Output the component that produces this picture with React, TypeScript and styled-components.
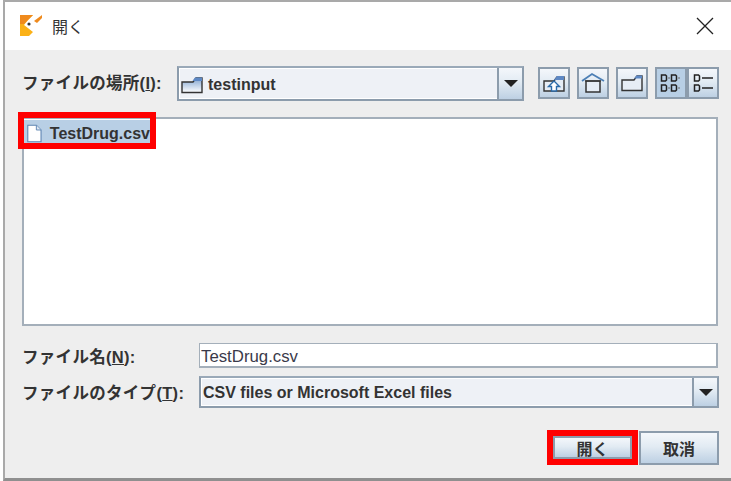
import styled, { createGlobalStyle } from 'styled-components';

const GlobalStyle = createGlobalStyle`
  html, body {
    margin: 0;
    padding: 0;
    background: #fff;
    width: 731px;
    height: 481px;
    overflow: hidden;
  }
  body {
    font-family: "Liberation Sans", "Noto Sans CJK JP", sans-serif;
  }
`;

const metal = 'linear-gradient(180deg, #f4f7fb 0%, #e2ebf3 45%, #bdd0e3 100%)';
const edge = '#8c9cac';

const Window = styled.div`
  box-sizing: border-box;
  margin-left: 3px;
  width: 728px;
  height: 481px;
  border-top: 2px solid #a9a9a9;
  border-left: 2px solid #a9a9a9;
  border-bottom: 3px solid #8f8f8f;
  display: flex;
  flex-direction: column;
`;

const TitleBar = styled.div`
  height: 48px;
  flex: none;
  background: #fff;
  display: flex;
  align-items: center;
  padding: 0 17px 0 15px;
  gap: 9px;
`;

const TitleText = styled.span`
  flex: 1;
  font-size: 16px;
  color: #333;
  font-family: "Noto Sans CJK JP", sans-serif;
`;

const Body = styled.div`
  flex: 1;
  background: #eeeeee;
  padding: 16px 0 0 17px;
  display: flex;
  flex-direction: column;
`;

const TopRow = styled.div`
  display: flex;
  align-items: flex-start;
  height: 35px;
`;

const Label = styled.label<{ $width: number }>`
  width: ${(p) => p.$width}px;
  flex: none;
  font-size: 16.5px;
  font-weight: 700;
  color: #333;
  white-space: nowrap;
  letter-spacing: 0.3px;
`;

const TopLabel = styled(Label)`
  line-height: 35px;
`;

const Combo = styled.div<{ $width: number; $height: number }>`
  box-sizing: border-box;
  width: ${(p) => p.$width}px;
  height: ${(p) => p.$height}px;
  flex: none;
  display: flex;
  align-items: stretch;
  border: 2px solid ${edge};
  border-top-color: #9aa9b8;
  background: #eef1f6;
`;

const ComboValue = styled.div`
  flex: 1;
  display: flex;
  align-items: center;
  gap: 5px;
  padding: 2px 0 0 1px;
  font-size: 16px;
  font-weight: 700;
  color: #333;
  border: 1px solid #fff;
  border-right: none;
`;

const ArrowButton = styled.div`
  width: 23px;
  flex: none;
  border-left: 2px solid ${edge};
  background: ${metal};
  display: flex;
  align-items: center;
  justify-content: center;
  &::after {
    content: '';
    width: 0;
    height: 0;
    border-left: 7px solid transparent;
    border-right: 7px solid transparent;
    border-top: 7px solid #222;
  }
`;

const Tools = styled.div`
  display: flex;
  margin-left: 14px;
  margin-top: 1px;
  gap: 7px;
`;

const ToolGroup = styled.div`
  display: flex;
`;

const ToolButton = styled.div<{ $active?: boolean }>`
  box-sizing: border-box;
  width: 32px;
  height: 32px;
  border: 2px solid ${edge};
  background: ${(p) => (p.$active ? '#b8cfe5' : metal)};
  display: flex;
  align-items: center;
  justify-content: center;
`;

const FileList = styled.div`
  box-sizing: border-box;
  width: 696px;
  height: 209px;
  margin-top: 16px;
  background: #fff;
  border: 2px solid #a4afba;
  padding: 1px 0 0;
  position: relative;
`;

const FileItem = styled.div`
  box-sizing: border-box;
  width: 126px;
  height: 25px;
  background: #b8cfe5;
  display: flex;
  align-items: center;
  gap: 8px;
  padding: 2px 0 0 3px;
  font-size: 16px;
  font-weight: 700;
  color: #333;
  white-space: nowrap;
  overflow: hidden;
`;

const ItemFrame = styled.div`
  position: absolute;
  box-sizing: border-box;
  left: -6px;
  top: -7px;
  width: 138px;
  height: 37px;
  border: 6px solid #ff0000;
  pointer-events: none;
`;

const Row = styled.div<{ $gap: number }>`
  display: flex;
  align-items: center;
  margin-top: ${(p) => p.$gap}px;
`;

const TextField = styled.div`
  box-sizing: border-box;
  width: 519px;
  height: 25px;
  background: #fff;
  border: solid #a4afba;
  border-width: 1px 2px 2px 1px;
  font-size: 16.8px;
  line-height: 25px;
  padding-left: 1px;
  color: #3a3a4a;
`;

const Footer = styled.div`
  display: flex;
  justify-content: flex-end;
  align-items: flex-end;
  margin-top: 22px;
  margin-right: 12px;
  gap: 1px;
`;

const ButtonFrame = styled.div`
  box-sizing: border-box;
  border: 6px solid #ff0000;
  width: 91px;
  height: 35px;
  flex: none;
`;

const PushButton = styled.button<{ $width?: number }>`
  box-sizing: border-box;
  width: ${(p) => (p.$width ? `${p.$width}px` : '100%')};
  height: ${(p) => (p.$width ? '34px' : '100%')};
  padding: 0;
  border: 2px solid ${edge};
  background: ${metal};
  font-family: "Noto Sans CJK JP", sans-serif;
  font-size: 16px;
  font-weight: 700;
  color: #333;
  line-height: 1;
`;

const Logo = () => (
  <svg width="23" height="22" viewBox="0 0 23 22">
    <path d="M0 0H13L8 5 4 10 13 17 9 21H0Z" fill="#fbb117" />
    <path d="M0 0H13L8 5 4 9H0Z" fill="#ef8a1d" />
    <circle cx="9" cy="9" r="1.6" fill="#333" />
    <path d="M14 6L22 0V3L17 8Z" fill="#ef8a1d" />
  </svg>
);

const CloseIcon = () => (
  <svg width="18" height="18" viewBox="0 0 18 18">
    <path d="M1 1L17 17M17 1L1 17" stroke="#222" strokeWidth="1.3" fill="none" />
  </svg>
);

const FolderIcon = () => (
  <svg width="22" height="18" viewBox="0 0 22 18">
    <defs>
      <linearGradient id="fold" x1="0" y1="0" x2="0" y2="1">
        <stop offset="0" stopColor="#7fa3d0" />
        <stop offset="1" stopColor="#ffffff" />
      </linearGradient>
    </defs>
    <path d="M1 6H12L15 2H21V16.5H1Z" fill="url(#fold)" stroke="#333" strokeWidth="1.4" />
    <path d="M14 1.5H21V5H11.5Z" fill="#5d88c4" />
  </svg>
);

const FileIcon = () => (
  <svg width="19" height="23" viewBox="0 0 19 23">
    <path d="M1 1H12L18 7V22H1Z" fill="#fff" stroke="#5f86b3" strokeWidth="1.4" />
    <path d="M12 1V7H18" fill="#dbe7f3" stroke="#5f86b3" strokeWidth="1.2" />
  </svg>
);

const UpFolderIcon = () => (
  <svg width="22" height="19" viewBox="0 0 22 19">
    <path d="M1 7H11L14 3H21V17H1Z" fill="#e6edf5" stroke="#333" strokeWidth="1.4" />
    <path d="M14 2H21V6H11Z" fill="#5d88c4" />
    <path d="M11 7L16.5 12.5H13.5V17H8.5V12.5H5.5Z" fill="#fff" stroke="#2a6aa8" strokeWidth="1.4" />
  </svg>
);

const HomeIcon = () => (
  <svg width="24" height="22" viewBox="0 0 24 22">
    <path d="M5 9H19V20H5Z" fill="#e6edf5" stroke="#333" strokeWidth="1.5" />
    <path d="M1 9L11 2 23 9" fill="none" stroke="#4c7fb5" strokeWidth="1.8" />
    <path d="M4 9H20" stroke="#333" strokeWidth="1.2" />
  </svg>
);

const NewFolderIcon = () => (
  <svg width="22" height="18" viewBox="0 0 22 18">
    <path d="M1 6H13L16 2H21V16.5H1Z" fill="#e6edf5" stroke="#333" strokeWidth="1.4" />
    <path d="M15.5 1.5H21V4.5H13Z" fill="#5d88c4" />
  </svg>
);

const GridIcon = () => (
  <svg width="22" height="20" viewBox="0 0 22 20" fill="none" stroke="#222" strokeWidth="1.5">
    <path d="M1.5 2H5.5L6.5 3V7L5.5 8H1.5Z" />
    <path d="M11.5 2H15.5L16.5 3V7L15.5 8H11.5Z" />
    <path d="M1.5 12H5.5L6.5 13V17L5.5 18H1.5Z" />
    <path d="M11.5 12H15.5L16.5 13V17L15.5 18H11.5Z" />
    <path d="M8 5H10M18 5H20M8 15H10M18 15H20" strokeWidth="1.2" stroke="#666" />
  </svg>
);

const ListIcon = () => (
  <svg width="22" height="20" viewBox="0 0 22 20" fill="none" stroke="#222" strokeWidth="1.5">
    <path d="M2.5 2H6.5L7.5 3V7L6.5 8H2.5Z" />
    <path d="M2.5 12H6.5L7.5 13V17L6.5 18H2.5Z" />
    <path d="M10 5H21M10 15H21" />
  </svg>
);

export default function App() {
  return (
    <>
      <GlobalStyle />
      <Window>
        <TitleBar>
          <Logo />
          <TitleText>開く</TitleText>
          <CloseIcon />
        </TitleBar>
        <Body>
          <TopRow>
            <TopLabel $width={155}>
              ファイルの場所(<u>I</u>):
            </TopLabel>
            <Combo $width={347} $height={35}>
              <ComboValue>
                <FolderIcon />
                testinput
              </ComboValue>
              <ArrowButton />
            </Combo>
            <Tools>
              <ToolButton><UpFolderIcon /></ToolButton>
              <ToolButton><HomeIcon /></ToolButton>
              <ToolButton><NewFolderIcon /></ToolButton>
              <ToolGroup>
                <ToolButton $active><GridIcon /></ToolButton>
                <ToolButton><ListIcon /></ToolButton>
              </ToolGroup>
            </Tools>
          </TopRow>
          <FileList>
            <FileItem>
              <FileIcon />
              TestDrug.csv
            </FileItem>
            <ItemFrame />
          </FileList>
          <Row $gap={17}>
            <Label $width={177}>
              ファイル名(<u>N</u>):
            </Label>
            <TextField>TestDrug.csv</TextField>
          </Row>
          <Row $gap={8}>
            <Label $width={177}>
              ファイルのタイプ(<u>T</u>):
            </Label>
            <Combo $width={520} $height={32}>
              <ComboValue>CSV files or Microsoft Excel files</ComboValue>
              <ArrowButton />
            </Combo>
          </Row>
          <Footer>
            <ButtonFrame>
              <PushButton>開く</PushButton>
            </ButtonFrame>
            <PushButton $width={80}>取消</PushButton>
          </Footer>
        </Body>
      </Window>
    </>
  );
}
